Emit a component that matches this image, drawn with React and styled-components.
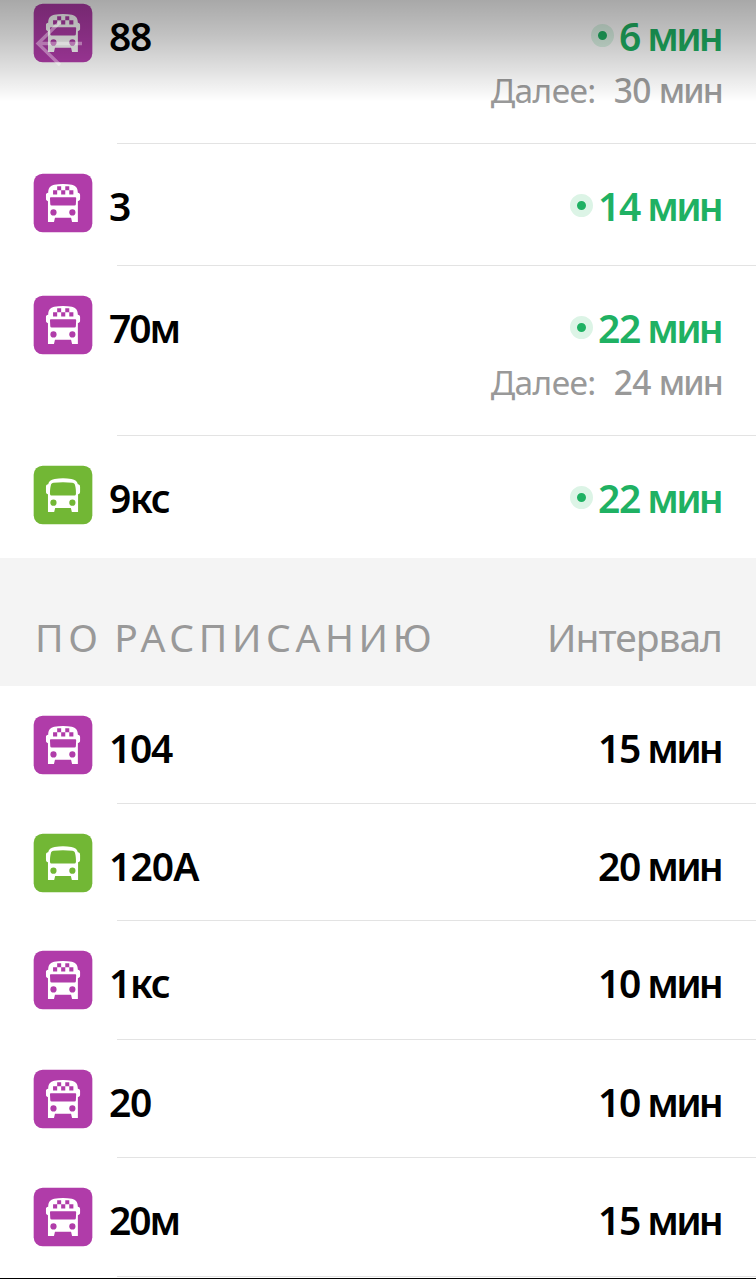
import React from "react";
import styled, { createGlobalStyle } from "styled-components";

// style
const GlobalStyle = createGlobalStyle`
  body {
    margin: 0;
    background: #fff;
    overflow: hidden;
  }
`;

const Screen = styled.div`
  position: relative;
  box-sizing: border-box;
  width: 756px;
  height: 1279px;
  overflow: hidden;
  background: #fff;
  border-bottom: 1px solid #000;
  font-family: "Noto Sans", "Open Sans", sans-serif;
  color: #000;
`;

const RouteList = styled.ul`
  list-style: none;
  padding: 0;
  margin: 0;
  margin-top: ${({ $scrolled }) => ($scrolled ? "-26px" : "0")};
`;

const Row = styled.li`
  display: flex;
  box-sizing: border-box;
  height: ${({ $height }) => $height}px;
  padding-left: 33px;
`;

const Badge = styled.div`
  flex: none;
  width: 60px;
  padding-top: 29px;

  svg {
    display: block;
  }
`;

const RowBody = styled.div`
  display: flex;
  flex: 1;
  justify-content: space-between;
  box-sizing: border-box;
  margin-left: 24px;
  padding: 35px 35px 0 0;
  border-bottom: ${({ $last }) => ($last ? "0" : "1px solid #e3e3e3")};
`;

const RouteName = styled.div`
  margin-left: -8px;
  font-size: 39px;
  font-weight: 600;
  line-height: 54px;
  letter-spacing: ${({ $spacing }) => $spacing || "-1.3px"};
`;

const Times = styled.div`
  display: flex;
  flex-direction: column;
  align-items: flex-end;
`;

const Time = styled.div`
  display: flex;
  font-size: 39px;
  font-weight: 600;
  line-height: 54px;
  letter-spacing: -1.3px;
  word-spacing: -1.5px;
  color: ${({ $live }) => ($live ? "#1fb163" : "#000")};
`;

const Unit = styled.span`
  letter-spacing: ${({ $small }) => ($small ? "-1.8px" : "-2.8px")};
`;

const LiveDot = styled.span`
  box-sizing: border-box;
  width: 23px;
  height: 23px;
  margin: 15px 5px 0 0;
  border: 7px solid #dcf4e6;
  border-radius: 50%;
  background: #1fb163;
`;

const Next = styled.div`
  display: flex;
  gap: 18px;
  margin-right: -1px;
  font-size: 33.5px;
  line-height: 54px;
  letter-spacing: -0.6px;
  color: #999;
`;

const NextTime = styled.span`
  font-weight: 500;
  letter-spacing: -0.7px;
`;

const SectionHeader = styled.div`
  display: flex;
  justify-content: space-between;
  box-sizing: border-box;
  height: 128px;
  padding: 52px 35px 0 35px;
  background: #f4f4f4;
  color: #999;
  font-size: 39px;
  line-height: 54px;
`;

const SectionTitle = styled.span`
  letter-spacing: 4.6px;
  word-spacing: -3px;
`;

const SectionNote = styled.span`
  margin-right: -1px;
  letter-spacing: -1px;
`;

const TopShade = styled.div`
  position: absolute;
  top: 0;
  left: 0;
  width: 100%;
  height: 102px;
  background: linear-gradient(
    rgba(0, 0, 0, 0.34),
    rgba(0, 0, 0, 0.24) 35%,
    rgba(0, 0, 0, 0.12) 68%,
    rgba(0, 0, 0, 0)
  );
`;

const BackButton = styled.div`
  position: absolute;
  top: 20px;
  left: 34px;
`;

function BusIcon() {
  return (
    <svg width="60" height="60" viewBox="-0.670 -0.670 60 60">
      <rect width="58.670" height="58.670" rx="9" fill="#72b735" />
      <path
        fill="#fff"
        d="M14.500 18.500C15.200 15.500 17 14 21 13.300c5.500-1 11.200-1 16.700 0 4 .7 5.800 2.200 6.500 5.200 1.600.2 2.200 1.200 2.200 2.500v5c0 1.500-.7 2.300-2 2.500V46.300h-6.200L37.200 42.300H21.500L20.500 46.300h-6.200V28.500c-1.300-.2-2-1-2-2.500v-5c0-1.300.6-2.300 2.200-2.500z"
      />
      <path
        fill="#72b735"
        d="M16.300 28c0-3.500.2-6 .9-8.500.4-1.500 1.300-2.100 2.800-2.300 6.200-.8 12.400-.8 18.600 0 1.500.2 2.400.8 2.800 2.300.7 2.500.9 5 .9 8.500 0 1.200-.8 1.900-2 1.900h-22c-1.200 0-2-.7-2-1.900z"
      />
      <circle cx="19.800" cy="37" r="3.100" fill="#72b735" />
      <circle cx="38.700" cy="37" r="3.100" fill="#72b735" />
    </svg>
  );
}

function MinibusIcon() {
  return (
    <svg width="60" height="60" viewBox="-0.670 -0.670 60 60">
      <rect width="58.670" height="58.670" rx="9" fill="#b03ca9" />
      <path
        fill="#fff"
        d="M14.500 19C14.700 14.500 16.500 12.200 20.500 11.200c5.500-1.300 12.200-1.300 17.700 0 4 1 5.800 3.300 6 7.800 1.600.2 2.200 1 2.200 2.200v4c0 1.400-.8 2.100-2.200 2.300V48.300h-5.800L37.400 44H21.300L20.300 48.300h-6V27.500c-1.300-.2-2-.9-2-2.300v-4c0-1.200.6-2 2.200-2.200z"
      />
      <path
        fill="#b03ca9"
        d="M23.500 12.700h4v4h-4zM31.600 12.700h4v4h-4zM19.400 16.700h4.100v4.100h-4.100zM27.500 16.700h4.100v4.100h-4.100zM35.600 16.700h4.100v4.100h-4.100z"
      />
      <path
        fill="#b03ca9"
        d="M17.200 23.500h24.400q1 0 .9 1l-.3 6q-.1 1.300-1.400 1.300H18q-1.300 0-1.400-1.300l-.3-6q-.1-1 .9-1z"
      />
      <circle cx="19.800" cy="38.800" r="3.100" fill="#b03ca9" />
      <circle cx="38.700" cy="38.800" r="3.100" fill="#b03ca9" />
    </svg>
  );
}

const liveRoutes = [
  { name: "88", time: "6", next: "30", height: 170 },
  { name: "3", time: "14", height: 122 },
  { name: "70м", time: "22", next: "24", height: 170, spacing: "-2px" },
  { name: "9кс", time: "22", bus: true, height: 122, last: true },
];

const scheduledRoutes = [
  { name: "104", time: "15", height: 118 },
  { name: "120А", time: "20", bus: true, height: 117, spacing: "-0.9px" },
  { name: "1кс", time: "10", height: 119 },
  { name: "20", time: "10", height: 118 },
  { name: "20м", time: "15", height: 119, spacing: "-2px" },
];

function Route({ route, live }) {
  return (
    <Row $height={route.height}>
      <Badge>{route.bus ? <BusIcon /> : <MinibusIcon />}</Badge>
      <RowBody $last={route.last}>
        <RouteName $spacing={route.spacing}>{route.name}</RouteName>
        <Times>
          <Time $live={live}>
            {live && <LiveDot />}
            <span>
              {route.time} <Unit>мин</Unit>
            </span>
          </Time>
          {route.next && (
            <Next>
              <span>Далее:</span>
              <NextTime>
                {route.next} <Unit $small>мин</Unit>
              </NextTime>
            </Next>
          )}
        </Times>
      </RowBody>
    </Row>
  );
}

function App() {
  return (
    <>
      <GlobalStyle />
      <Screen>
        <RouteList $scrolled>
          {liveRoutes.map((route) => (
            <Route key={route.name} route={route} live />
          ))}
        </RouteList>

        <SectionHeader>
          <SectionTitle>ПО РАСПИСАНИЮ</SectionTitle>
          <SectionNote>Интервал</SectionNote>
        </SectionHeader>

        <RouteList>
          {scheduledRoutes.map((route) => (
            <Route key={route.name} route={route} />
          ))}
        </RouteList>

        <TopShade />
        <BackButton>
          <svg width="50" height="48" viewBox="0 0 50 48">
            <path
              d="M26 2 4 23.500 26 45M4 23.500h44"
              fill="none"
              stroke="#fff"
              strokeOpacity="0.35"
              strokeWidth="3.300"
            />
          </svg>
        </BackButton>
      </Screen>
    </>
  );
}

export default App;
